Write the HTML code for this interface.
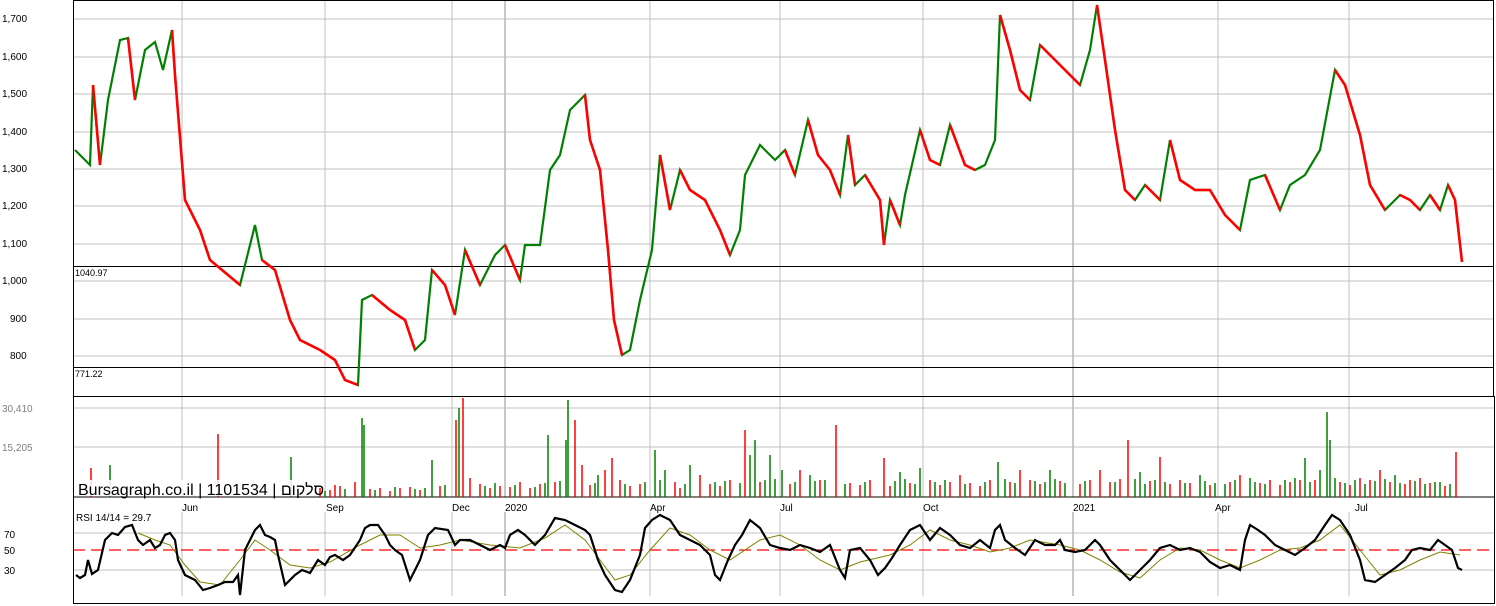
<!DOCTYPE html>
<html><head><meta charset="utf-8"><style>
html,body{margin:0;padding:0;background:#fff;}
svg{display:block;font-family:"Liberation Sans",sans-serif;}
</style></head><body>
<svg width="1496" height="606" viewBox="0 0 1496 606" xmlns="http://www.w3.org/2000/svg">
<rect width="1496" height="606" fill="#fff"/>
<!-- grid verticals -->
<g stroke="#c0c0c0" stroke-width="1">
<line x1="182" y1="0" x2="182" y2="497"/><line x1="325" y1="0" x2="325" y2="497"/><line x1="452" y1="0" x2="452" y2="497"/><line x1="650" y1="0" x2="650" y2="497"/><line x1="780" y1="0" x2="780" y2="497"/><line x1="923" y1="0" x2="923" y2="497"/><line x1="1218" y1="0" x2="1218" y2="497"/><line x1="1349" y1="0" x2="1349" y2="497"/>
<line x1="182" y1="512" x2="182" y2="596"/><line x1="325" y1="512" x2="325" y2="596"/><line x1="452" y1="512" x2="452" y2="596"/><line x1="650" y1="512" x2="650" y2="596"/><line x1="780" y1="512" x2="780" y2="596"/><line x1="923" y1="512" x2="923" y2="596"/><line x1="1218" y1="512" x2="1218" y2="596"/><line x1="1349" y1="512" x2="1349" y2="596"/>
</g>
<g stroke="#909090" stroke-width="1"><line x1="505" y1="0" x2="505" y2="497"/><line x1="1073" y1="0" x2="1073" y2="497"/><line x1="505" y1="512" x2="505" y2="596"/><line x1="1073" y1="512" x2="1073" y2="596"/></g>
<g stroke="#c0c0c0" stroke-width="1">
<line x1="73" y1="19" x2="1494" y2="19"/><line x1="73" y1="57" x2="1494" y2="57"/><line x1="73" y1="94" x2="1494" y2="94"/><line x1="73" y1="132" x2="1494" y2="132"/><line x1="73" y1="169" x2="1494" y2="169"/><line x1="73" y1="206" x2="1494" y2="206"/><line x1="73" y1="244" x2="1494" y2="244"/><line x1="73" y1="281" x2="1494" y2="281"/><line x1="73" y1="319" x2="1494" y2="319"/><line x1="73" y1="356" x2="1494" y2="356"/>
<line x1="73" y1="408" x2="1494" y2="408"/><line x1="73" y1="447" x2="1494" y2="447"/>
<line x1="73" y1="533" x2="1494" y2="533"/><line x1="73" y1="570" x2="1494" y2="570"/>
</g>
<line x1="73" y1="550" x2="1494" y2="550" stroke="#ff0000" stroke-width="1.3" stroke-dasharray="12,6"/>
<!-- frames -->
<g stroke="#000" stroke-width="1" fill="none">
<rect x="73.5" y="0.5" width="1420" height="396"/>
<line x1="73" y1="497" x2="1494" y2="497"/>
<line x1="73" y1="266.5" x2="1494" y2="266.5"/><line x1="73" y1="367.5" x2="1494" y2="367.5"/>
<line x1="73.5" y1="396" x2="73.5" y2="604"/><line x1="73" y1="603.5" x2="1494" y2="603.5"/><line x1="1494.5" y1="396" x2="1494.5" y2="604"/>
</g>
<!-- axis labels -->
<g font-size="10" fill="#000">
<text x="2" y="22">1,700</text><text x="2" y="60">1,600</text><text x="2" y="97">1,500</text><text x="2" y="135">1,400</text><text x="2" y="172">1,300</text><text x="2" y="209">1,200</text><text x="2" y="247">1,100</text><text x="2" y="284">1,000</text><text x="10" y="322">900</text><text x="10" y="359">800</text>
<text x="75" y="276" font-size="9">1040.97</text><text x="75" y="377" font-size="9">771.22</text>
</g>
<g font-size="10" fill="#808080"><text x="2" y="412">30,410</text><text x="2" y="451">15,205</text></g>
<g font-size="10" fill="#000"><text x="4" y="538">70</text><text x="4" y="554">50</text><text x="4" y="574">30</text>
<text x="182" y="511">Jun</text><text x="326" y="511">Sep</text><text x="452" y="511">Dec</text><text x="505" y="511">2020</text><text x="650" y="511">Apr</text><text x="780" y="511">Jul</text><text x="923" y="511">Oct</text><text x="1073" y="511">2021</text><text x="1215" y="511">Apr</text><text x="1355" y="511">Jul</text>
<text x="76" y="521" font-size="10">RSI 14/14 = 29.7</text></g>
<!-- price -->
<polyline fill="none" stroke="#008000" stroke-width="2.2" points="75,150 90,165 93,85 100,165 108,100 120,40 128,38 135,100 145,50 155,42 163,70 172,30 175,75 185,200 200,230 210,260 240,285 255,225 262,260 275,270 290,320 300,340 320,350 335,360 345,380 358,385 362,300 372,295 390,310 405,320 415,350 425,340 432,270 445,285 455,315 465,250 480,285 495,255 505,245 520,280 525,245 540,245 550,170 560,155 570,110 585,95 590,140 600,170 608,250 614,320 622,355 630,350 640,300 652,250 660,155 670,210 680,170 690,190 705,200 720,230 730,255 740,230 745,175 760,145 775,160 785,150 795,175 808,120 818,155 830,170 840,195 848,135 855,185 865,175 880,200 884,245 890,200 900,225 905,195 920,130 930,160 940,165 950,125 965,165 975,170 985,165 995,140 1000,15 1010,50 1020,90 1030,100 1040,45 1055,60 1070,75 1080,85 1090,50 1097,5 1105,60 1115,130 1125,190 1135,200 1145,185 1160,200 1170,140 1180,180 1195,190 1210,190 1225,215 1240,230 1250,180 1265,175 1280,210 1290,185 1305,175 1320,150 1335,70 1345,85 1360,135 1370,185 1385,210 1400,195 1410,200 1420,210 1430,195 1440,210 1448,185 1455,200 1462,262"/>
<g fill="none" stroke="#ff0000" stroke-width="2.6">
<polyline points="93,85 100,165"/><polyline points="128,38 135,100"/><polyline points="172,30 175,75 185,200 200,230 210,260 240,285"/><polyline points="262,260 275,270 290,320 300,340 320,350 335,360 345,380 358,385"/><polyline points="372,295 390,310 405,320 415,350"/><polyline points="432,270 445,285 455,315"/><polyline points="465,250 480,285"/><polyline points="505,245 520,280"/><polyline points="585,95 590,140 600,170 608,250 614,320 622,355"/><polyline points="660,155 670,210"/><polyline points="680,170 690,190 705,200 720,230 730,255"/><polyline points="785,150 795,175"/><polyline points="808,120 818,155 830,170 840,195"/><polyline points="848,135 855,185"/><polyline points="865,175 880,200 884,245"/><polyline points="890,200 900,225"/><polyline points="920,130 930,160 940,165"/><polyline points="950,125 965,165 975,170"/><polyline points="1000,15 1010,50 1020,90 1030,100"/><polyline points="1040,45 1055,60 1070,75 1080,85"/><polyline points="1097,5 1105,60 1115,130 1125,190 1135,200"/><polyline points="1145,185 1160,200"/><polyline points="1170,140 1180,180 1195,190 1210,190 1225,215 1240,230"/><polyline points="1265,175 1280,210"/><polyline points="1335,70 1345,85 1360,135 1370,185 1385,210"/><polyline points="1400,195 1410,200 1420,210"/><polyline points="1430,195 1440,210"/><polyline points="1448,185 1455,200 1462,262"/></g>
<!-- volume -->
<g stroke-width="1.5">
<g stroke="#ff0000"><line x1="91" y1="497" x2="91" y2="468"/><line x1="218" y1="497" x2="218" y2="434"/><line x1="335" y1="497" x2="335" y2="485"/><line x1="355" y1="497" x2="355" y2="482"/><line x1="380" y1="497" x2="380" y2="488"/><line x1="410" y1="497" x2="410" y2="487"/><line x1="456" y1="497" x2="456" y2="420"/><line x1="463" y1="497" x2="463" y2="398"/><line x1="470" y1="497" x2="470" y2="478"/><line x1="520" y1="497" x2="520" y2="482"/><line x1="575" y1="497" x2="575" y2="420"/><line x1="582" y1="497" x2="582" y2="465"/><line x1="605" y1="497" x2="605" y2="470"/><line x1="612" y1="497" x2="612" y2="458"/><line x1="700" y1="497" x2="700" y2="475"/><line x1="745" y1="497" x2="745" y2="430"/><line x1="800" y1="497" x2="800" y2="470"/><line x1="836" y1="497" x2="836" y2="425"/><line x1="884" y1="497" x2="884" y2="458"/><line x1="960" y1="497" x2="960" y2="475"/><line x1="1020" y1="497" x2="1020" y2="470"/><line x1="1100" y1="497" x2="1100" y2="470"/><line x1="1128" y1="497" x2="1128" y2="440"/><line x1="1160" y1="497" x2="1160" y2="457"/><line x1="1240" y1="497" x2="1240" y2="475"/><line x1="1300" y1="497" x2="1300" y2="480"/><line x1="1360" y1="497" x2="1360" y2="478"/><line x1="1380" y1="497" x2="1380" y2="470"/><line x1="1456" y1="497" x2="1456" y2="452"/><line x1="1420" y1="497" x2="1420" y2="478"/></g>
<g stroke="#008000"><line x1="110" y1="497" x2="110" y2="465"/><line x1="291" y1="497" x2="291" y2="457"/><line x1="362" y1="497" x2="362" y2="418"/><line x1="364" y1="497" x2="364" y2="425"/><line x1="432" y1="497" x2="432" y2="460"/><line x1="459" y1="497" x2="459" y2="408"/><line x1="548" y1="497" x2="548" y2="435"/><line x1="568" y1="497" x2="568" y2="400"/><line x1="566" y1="497" x2="566" y2="440"/><line x1="598" y1="497" x2="598" y2="475"/><line x1="655" y1="497" x2="655" y2="450"/><line x1="665" y1="497" x2="665" y2="470"/><line x1="690" y1="497" x2="690" y2="465"/><line x1="750" y1="497" x2="750" y2="455"/><line x1="755" y1="497" x2="755" y2="440"/><line x1="770" y1="497" x2="770" y2="455"/><line x1="782" y1="497" x2="782" y2="470"/><line x1="810" y1="497" x2="810" y2="475"/><line x1="900" y1="497" x2="900" y2="472"/><line x1="920" y1="497" x2="920" y2="468"/><line x1="998" y1="497" x2="998" y2="462"/><line x1="1050" y1="497" x2="1050" y2="470"/><line x1="1140" y1="497" x2="1140" y2="472"/><line x1="1200" y1="497" x2="1200" y2="475"/><line x1="1250" y1="497" x2="1250" y2="478"/><line x1="1305" y1="497" x2="1305" y2="458"/><line x1="1327" y1="497" x2="1327" y2="412"/><line x1="1330" y1="497" x2="1330" y2="440"/><line x1="1395" y1="497" x2="1395" y2="475"/><line x1="1440" y1="497" x2="1440" y2="482"/></g>
</g>
<path d="M320 497 V488 M330 497 V490 M340 497 V486 M370 497 V489 M390 497 V491 M400 497 V488 M420 497 V490 M440 497 V486 M480 497 V484 M490 497 V488 M500 497 V486 M510 497 V487 M530 497 V488 M540 497 V484 M555 497 V482 M590 497 V485 M620 497 V480 M630 497 V486 M640 497 V484 M675 497 V482 M680 497 V488 M710 497 V484 M720 497 V486 M730 497 V480 M760 497 V482 M790 497 V484 M820 497 V480 M850 497 V483 M860 497 V485 M870 497 V480 M890 497 V486 M910 497 V483 M930 497 V480 M940 497 V485 M950 497 V482 M970 497 V483 M980 497 V486 M990 497 V480 M1010 497 V482 M1030 497 V480 M1040 497 V484 M1060 497 V481 M1080 497 V484 M1090 497 V480 M1110 497 V482 M1120 497 V479 M1150 497 V481 M1170 497 V484 M1180 497 V480 M1190 497 V483 M1210 497 V485 M1230 497 V482 M1260 497 V483 M1270 497 V480 M1280 497 V485 M1290 497 V482 M1315 497 V480 M1340 497 V482 M1350 497 V485 M1370 497 V480 M1390 497 V482 M1405 497 V484 M1410 497 V480 M1430 497 V483 M1445 497 V486" stroke="#ff0000" stroke-width="1.5"/>
<path d="M325 497 V491 M345 497 V489 M375 497 V490 M395 497 V487 M415 497 V489 M425 497 V488 M445 497 V485 M485 497 V486 M495 497 V483 M515 497 V485 M535 497 V487 M545 497 V483 M560 497 V481 M595 497 V483 M625 497 V484 M645 497 V482 M660 497 V480 M685 497 V484 M715 497 V482 M725 497 V481 M740 497 V483 M765 497 V480 M775 497 V479 M795 497 V482 M815 497 V481 M825 497 V480 M845 497 V484 M865 497 V482 M895 497 V481 M905 497 V479 M915 497 V484 M935 497 V482 M945 497 V480 M965 497 V484 M985 497 V482 M1005 497 V479 M1015 497 V483 M1035 497 V481 M1045 497 V482 M1055 497 V479 M1065 497 V483 M1085 497 V481 M1115 497 V482 M1135 497 V479 M1145 497 V484 M1155 497 V480 M1165 497 V482 M1185 497 V483 M1205 497 V481 M1215 497 V483 M1225 497 V484 M1235 497 V480 M1255 497 V482 M1265 497 V484 M1285 497 V480 M1295 497 V478 M1310 497 V482 M1320 497 V470 M1335 497 V478 M1345 497 V483 M1355 497 V480 M1365 497 V484 M1375 497 V481 M1385 497 V479 M1400 497 V483 M1415 497 V481 M1425 497 V484 M1435 497 V482 M1450 497 V484" stroke="#008000" stroke-width="1.5"/>
<rect x="76" y="480" width="240" height="16" fill="#fff" opacity="0.85"/>
<text x="78" y="495" font-size="16" fill="#000" font-family="'Liberation Sans','Noto Sans CJK SC',sans-serif">Bursagraph.co.il | 1101534 | סלקום</text>
<!-- RSI -->
<polyline fill="none" stroke="#808000" stroke-width="1" points="138,533 155,540 170,545 185,565 200,582 220,585 240,560 255,540 270,550 290,565 310,568 330,562 360,545 380,535 400,535 420,548 440,545 460,540 490,545 520,548 545,538 565,525 585,540 600,560 615,580 630,575 650,550 670,528 690,535 710,550 730,560 760,540 780,535 800,545 820,560 840,570 860,562 890,555 910,545 930,530 950,540 970,545 990,552 1010,548 1030,540 1060,545 1080,550 1100,560 1120,572 1140,578 1160,560 1180,548 1200,550 1220,560 1240,568 1260,560 1280,550 1300,548 1320,540 1340,525 1360,550 1380,575 1400,570 1420,560 1440,552 1460,555"/>
<polyline fill="none" stroke="#000" stroke-width="2.2" points="76,575 80,578 85,575 88,560 92,574 98,570 105,540 112,533 118,535 125,527 132,525 138,540 143,545 150,540 155,548 160,545 165,535 170,533 175,540 178,560 185,575 195,580 203,590 210,588 218,585 225,582 233,582 238,575 240,595 245,550 250,540 255,530 260,525 265,535 270,537 275,540 278,555 285,585 290,580 295,575 302,570 310,573 318,560 325,565 330,557 335,555 343,560 350,555 360,540 365,528 370,525 378,525 385,535 390,545 395,550 402,555 410,580 420,560 428,535 435,528 448,530 455,545 460,540 470,540 480,545 490,550 500,545 505,548 510,535 518,530 525,535 535,545 545,535 555,518 565,520 575,525 585,530 590,535 598,560 605,575 615,590 622,592 630,580 640,555 645,528 652,520 660,515 670,520 680,535 690,540 700,545 710,555 715,575 720,580 728,560 735,545 742,535 750,520 760,528 770,545 780,548 790,550 800,545 810,548 820,552 830,545 840,570 845,578 850,550 860,548 870,560 878,575 885,568 892,558 900,545 910,530 920,525 930,540 940,528 950,535 960,545 970,548 980,540 990,548 995,530 1000,525 1005,540 1015,548 1025,555 1035,540 1045,545 1055,545 1060,540 1065,550 1075,552 1085,550 1095,540 1100,545 1110,560 1120,570 1130,580 1140,570 1150,560 1160,548 1170,545 1180,550 1190,548 1200,552 1210,562 1220,568 1230,565 1240,570 1245,540 1250,525 1258,530 1265,535 1275,545 1285,550 1295,555 1305,548 1315,540 1325,525 1332,515 1340,520 1350,535 1360,560 1365,580 1375,582 1385,575 1395,568 1405,560 1412,550 1420,548 1430,550 1438,540 1445,545 1452,550 1458,568 1462,570"/>
</svg>
</body></html>
